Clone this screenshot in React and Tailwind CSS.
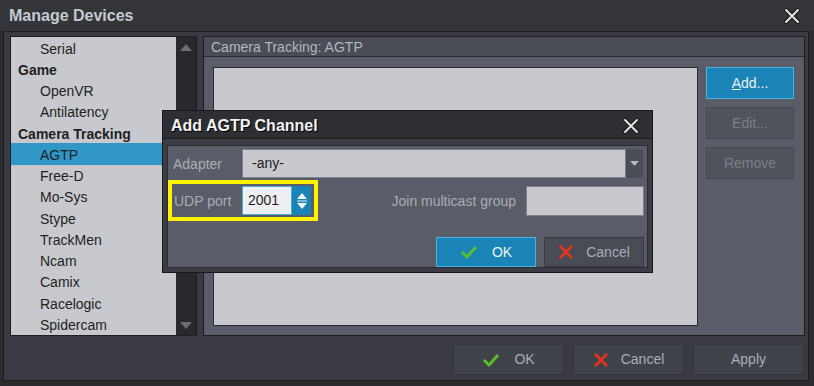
import React from "react";

const devices = [
  { label: "Serial", level: 1 },
  { label: "Game", level: 0 },
  { label: "OpenVR", level: 1 },
  { label: "Antilatency", level: 1 },
  { label: "Camera Tracking", level: 0 },
  { label: "AGTP", level: 1, selected: true },
  { label: "Free-D", level: 1 },
  { label: "Mo-Sys", level: 1 },
  { label: "Stype", level: 1 },
  { label: "TrackMen", level: 1 },
  { label: "Ncam", level: 1 },
  { label: "Camix", level: 1 },
  { label: "Racelogic", level: 1 },
  { label: "Spidercam", level: 1 },
];

function CloseIcon() {
  return (
    <svg width="18" height="18" viewBox="0 0 18 18">
      <path d="M3 3 L15 15 M15 3 L3 15" stroke="#1a1b1e" strokeWidth="4" strokeLinecap="round" />
      <path d="M3 3 L15 15 M15 3 L3 15" stroke="#e4e4e4" strokeWidth="2" strokeLinecap="round" />
    </svg>
  );
}

function CheckIcon() {
  return (
    <svg width="18" height="16" viewBox="0 0 18 16">
      <path d="M2 8 L7 13 L16 3" fill="none" stroke="#5cbd2c" strokeWidth="3" strokeLinejoin="round" />
    </svg>
  );
}

function CrossIcon() {
  return (
    <svg width="16" height="16" viewBox="0 0 16 16">
      <path d="M2 2 L14 14 M14 2 L2 14" stroke="#e8331d" strokeWidth="2.6" />
    </svg>
  );
}

function Tri({ up, color = "#6c6e76", w = 12, h = 7 }) {
  return (
    <svg width={w} height={h} viewBox="0 0 12 7">
      <path d={up ? "M0 7 L6 0 L12 7 Z" : "M0 0 L6 7 L12 0 Z"} fill={color} />
    </svg>
  );
}

function Btn({ children, className = "" }) {
  return (
    <div className={`flex items-center justify-center border ${className}`}>{children}</div>
  );
}

function AddChannelDialog() {
  return (
    <div className="absolute left-[162px] top-[110px] w-[491px] h-[163px] bg-[#3c3d44] border border-[#18191c] flex flex-col">
      <div className="h-[28px] bg-[#2e2f33] flex items-center justify-between pl-[8px] pr-[12px] pt-[2px] border-b border-[#1b1c1f]">
        <span className="text-[16px] font-bold text-[#f2f2f2] [text-shadow:1px_1px_0_#000]">Add AGTP Channel</span>
        <CloseIcon />
      </div>
      <div className="flex-1 px-[4px] pt-[6px] pb-[4px]">
        <div className="h-full bg-[#5a5c67] border border-[#2c2d32] flex flex-col pr-[3px]">
          <div className="flex items-center mt-[3px] h-[29px]">
            <span className="w-[74px] pl-[5px] pt-[1px] text-[14px] text-[#a9adb5]">Adapter</span>
            <div className="flex h-full w-[401px]">
              <div className="flex-1 bg-[#c8c9ce] border border-[#7d7f88] flex items-center pl-[9px] text-[14px] text-[#1e1e1e]">-any-</div>
              <div className="w-[17px] bg-[#4b4d57] flex items-center justify-center">
                <Tri color="#b9bcc3" w={9} h={5} />
              </div>
            </div>
          </div>
          <div className="flex items-center mt-[2px]">
            <div className="border-[4px] border-[#fff200] h-[41px] w-[150px] flex items-center pl-[2px]">
              <span className="w-[68px] pt-[1px] text-[14px] text-[#a9adb5]">UDP port</span>
              <div className="flex h-[29px]">
                <div className="w-[50px] bg-[#eeeff1] border border-[#44aee0] flex items-center pl-[5px] text-[14px] text-[#1e1e1e]">2001</div>
                <div className="w-[19px] bg-[#1a84b6] flex flex-col items-center justify-center gap-[2px]">
                  <svg width="12" height="20" viewBox="0 0 12 20">
                    <path d="M1 8 L6 2 L11 8 Z" fill="#f4f4f4" />
                    <path d="M1 10 H11" stroke="#f4f4f4" strokeWidth="1" />
                    <path d="M1 12 L6 18 L11 12 Z" fill="#f4f4f4" />
                  </svg>
                </div>
              </div>
            </div>
            <span className="ml-auto mr-[10px] pt-[1px] text-[14px] text-[#a9adb5]">Join multicast group</span>
            <div className="w-[118px] h-[30px] bg-[#c8c9ce] border border-[#7d7f88]" />
          </div>
          <div className="flex justify-end gap-[8px] mt-[16px]">
            <Btn className="w-[100px] h-[30px] bg-[#1a84b6] border-[#4ab4e2] gap-[14px] text-[14px] text-[#eef4f8]">
              <CheckIcon />
              <span>OK</span>
            </Btn>
            <Btn className="w-[100px] h-[30px] bg-[#494b55] border-[#3a3b42] gap-[12px] text-[14px] text-[#a9adb5]">
              <CrossIcon />
              <span>Cancel</span>
            </Btn>
          </div>
        </div>
      </div>
    </div>
  );
}

export default function App() {
  return (
    <div className="relative w-[814px] h-[386px] bg-[#2b2c30] font-['Liberation_Sans',Arial,sans-serif] select-none overflow-hidden">
      <div className="h-[31px] bg-[#333539] flex items-center justify-between pl-[9px] pr-[13px]">
        <span className="text-[16px] font-bold text-[#c5c9d2]">Manage Devices</span>
        <CloseIcon />
      </div>
      <div className="ml-[3px] w-[806px] h-[350px] border border-[#1d1e21] bg-[#3a3b42] flex flex-col">
        <div className="flex h-[304px] pl-[6px] pr-[3px] pt-[4px]">
          {/* device tree */}
          <div className="w-[187px] border border-[#1d1e21] flex">
            <div className="w-[165px] bg-[#c8c9ce] flex flex-col">
              {devices.map((d) => (
                <div
                  key={d.label}
                  className={`h-[21.25px] pt-[3px] flex items-center text-[14px] text-[#1f1f22] ${d.level ? "pl-[29px] font-normal" : "pl-[7px] font-bold"} ${d.selected ? "bg-[#2f96c6]" : ""}`}
                >
                  {d.label}
                </div>
              ))}
            </div>
            <div className="flex-1 bg-[#28292e] flex flex-col items-center justify-between pt-[7px] pb-[6px]">
              <Tri up />
              <Tri />
            </div>
          </div>
          {/* channel panel */}
          <div className="flex-1 ml-[6px] border border-[#1d1e21] flex flex-col">
            <div className="h-[20px] pt-[2px] bg-[#4a4c56] border-b border-[#2a2b30] flex items-center pl-[7px] text-[14px] text-[#b3b7bf]">
              Camera Tracking: AGTP
            </div>
            <div className="flex-1 bg-[#5a5c67] flex gap-[8px] pl-[9px] pr-[10px] pt-[10px] pb-[9px]">
              <div className="flex-1 bg-[#c8c9ce] border border-[#2a2b30]" />
              <div className="w-[88px] flex flex-col gap-[8px]">
                <Btn className="h-[32px] bg-[#1a84b6] border-[#4ab4e2] text-[14px] text-[#e8f0f6]">
                  <span><span className="underline">A</span>dd...</span>
                </Btn>
                <Btn className="h-[32px] bg-[#50525c] border-[#474952] text-[14px] text-[#7b7e88]">Edit...</Btn>
                <Btn className="h-[32px] bg-[#50525c] border-[#474952] text-[14px] text-[#7b7e88]">Remove</Btn>
              </div>
            </div>
          </div>
        </div>
        <div className="flex-1 flex justify-end items-start gap-[9px] pt-[8px] pr-[4px]">
          <Btn className="w-[111px] h-[31px] bg-[#41434b] border-[#35363c] gap-[14px] text-[14px] text-[#a9adb5]">
            <CheckIcon />
            <span>OK</span>
          </Btn>
          <Btn className="w-[111px] h-[31px] bg-[#41434b] border-[#35363c] gap-[12px] text-[14px] text-[#a9adb5]">
            <CrossIcon />
            <span>Cancel</span>
          </Btn>
          <Btn className="w-[111px] h-[31px] bg-[#41434b] border-[#35363c] text-[14px] text-[#a9adb5]">Apply</Btn>
        </div>
      </div>
      <AddChannelDialog />
    </div>
  );
}
